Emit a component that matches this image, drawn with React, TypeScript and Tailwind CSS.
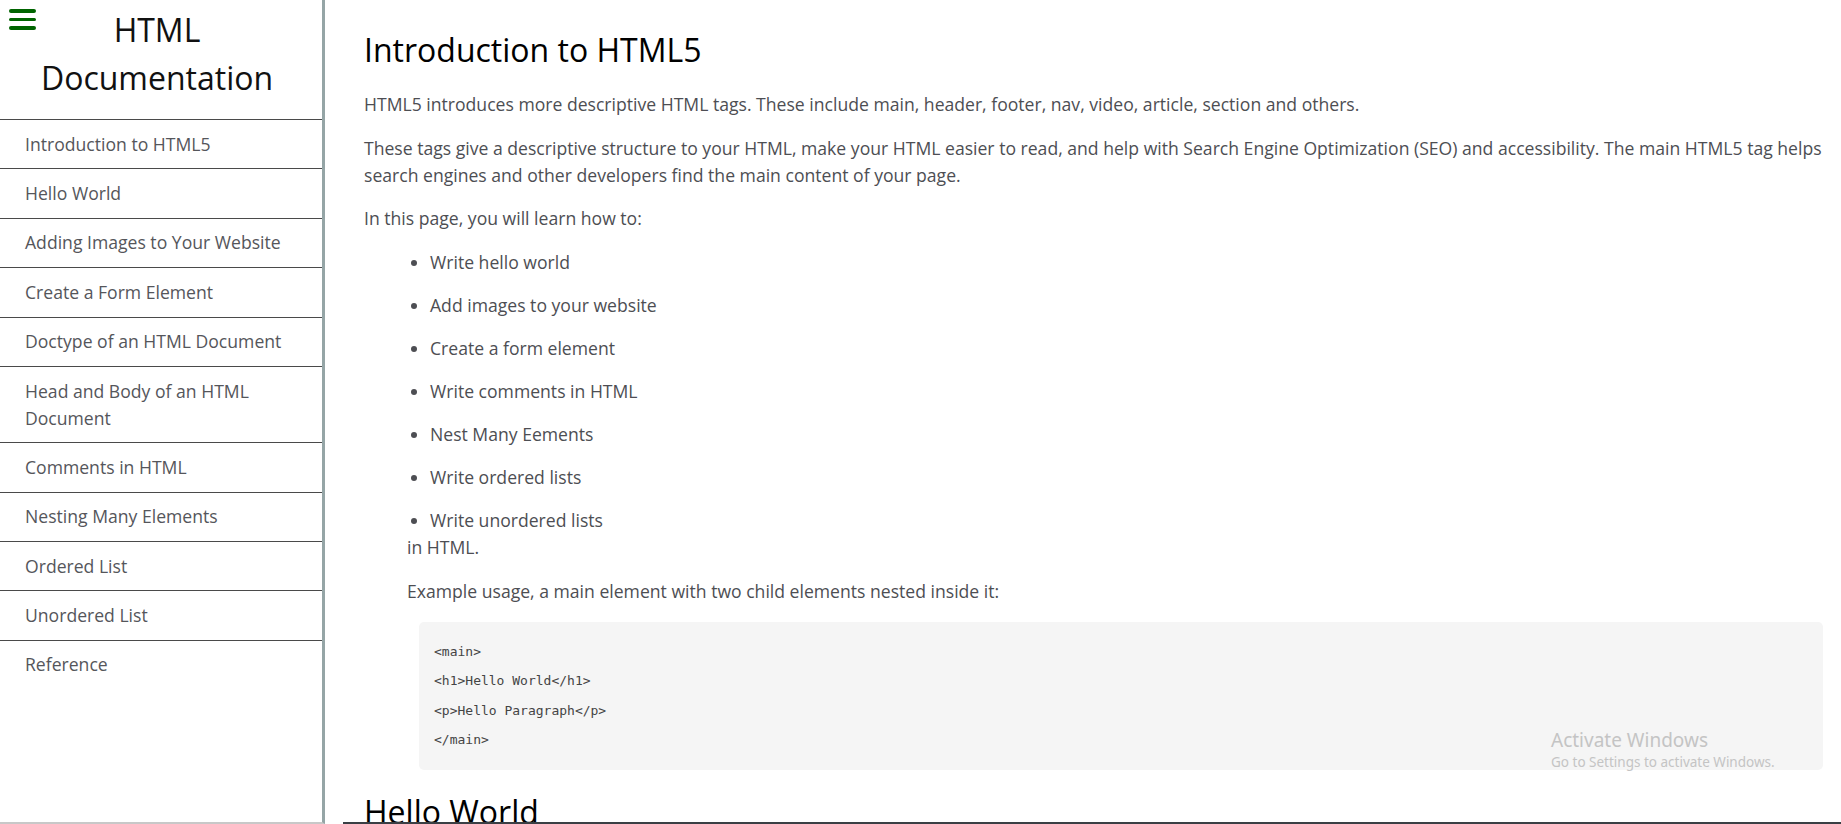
import React from "react";

const navLinks = [
  "Introduction to HTML5",
  "Hello World",
  "Adding Images to Your Website",
  "Create a Form Element",
  "Doctype of an HTML Document",
  "Head and Body of an HTML Document",
  "Comments in HTML",
  "Nesting Many Elements",
  "Ordered List",
  "Unordered List",
  "Reference",
];

const learnItems = [
  "Write hello world",
  "Add images to your website",
  "Create a form element",
  "Write comments in HTML",
  "Nest Many Eements",
  "Write ordered lists",
  "Write unordered lists",
];

const codeLines = ["<main>", "<h1>Hello World</h1>", "<p>Hello Paragraph</p>", "</main>"];

function Sidebar() {
  return (
    <nav className="w-[325px] shrink-0 h-full border-r-[3px] border-[#95a5a6] border-b-2 border-b-[#c8c8c8] bg-white">
      <header className="relative pt-[6px] pb-[17px] pr-[8px]">
        <button className="absolute left-[9px] top-[9px] flex flex-col gap-[5px]">
          <span className="block w-[27px] h-[3.5px] rounded-full bg-[#006400]" />
          <span className="block w-[27px] h-[3.5px] rounded-full bg-[#006400]" />
          <span className="block w-[27px] h-[3.5px] rounded-full bg-[#006400]" />
        </button>
        <h1 className="text-center text-[32px] leading-[48px] text-[#111]">
          HTML
          <br />
          Documentation
        </h1>
      </header>
      <ul>
        {navLinks.map((link) => (
          <li key={link} className="border-t border-[#4a4a4a]">
            <a
              href="#"
              className="block pl-[25px] pr-[30px] py-[10.7px] text-[17.6px] leading-[27px] text-[#55565b]"
            >
              {link}
            </a>
          </li>
        ))}
      </ul>
    </nav>
  );
}

function App() {
  return (
    <div className="flex h-[824px] overflow-hidden bg-white font-['Open_Sans',sans-serif]">
      <Sidebar />
      <main className="flex-1 flex flex-col pl-[18px] min-w-0">
        <div className="flex-1 overflow-hidden pl-[21px] pr-[18px] pt-[31px] border-b-2 border-[#3a3f44]">
          <section>
            <h2 className="text-[32px] leading-[38px] text-black">Introduction to HTML5</h2>
            <div className="text-[17.6px] leading-[26.4px] text-[#4d4e53]">
              <p className="mt-[22px]">
                HTML5 introduces more descriptive HTML tags. These include main, header, footer, nav, video,
                article, section and others.
              </p>
              <p className="mt-[18px]">
                These tags give a descriptive structure to your HTML, make your HTML easier to read, and help
                with Search Engine Optimization (SEO) and accessibility. The main HTML5 tag helps search
                engines and other developers find the main content of your page.
              </p>
              <p className="mt-[17px]">In this page, you will learn how to:</p>
              <div className="ml-[43px]">
                <ul className="list-disc pl-[23px] pt-[1px]">
                  {learnItems.map((item) => (
                    <li key={item} className="mt-[16.6px]">
                      {item}
                    </li>
                  ))}
                </ul>
                <p>in HTML.</p>
                <p className="mt-[17.6px]">Example usage, a main element with two child elements nested inside it:</p>
                <div className="mt-[18px] ml-[12px] rounded-[5px] bg-[#f5f5f5] pl-[15px] pt-[15px] pb-[15px] font-['DejaVu_Sans_Mono',monospace] text-[13px] leading-[29.4px] text-[#444]">
                  {codeLines.map((line) => (
                    <div key={line}>{line}</div>
                  ))}
                </div>
              </div>
            </div>
          </section>
          <section>
            <h2 className="mt-[23px] text-[32px] leading-[38px] text-black">Hello World</h2>
          </section>
        </div>
      </main>
      <div className="absolute left-[1551px] top-[727px] font-['Noto_Sans',sans-serif] text-[#c4c4c4] pointer-events-none">
        <div className="text-[19px] leading-[26px]">Activate Windows</div>
        <div className="text-[13.5px] leading-[19px]">Go to Settings to activate Windows.</div>
      </div>
    </div>
  );
}

export default App;
